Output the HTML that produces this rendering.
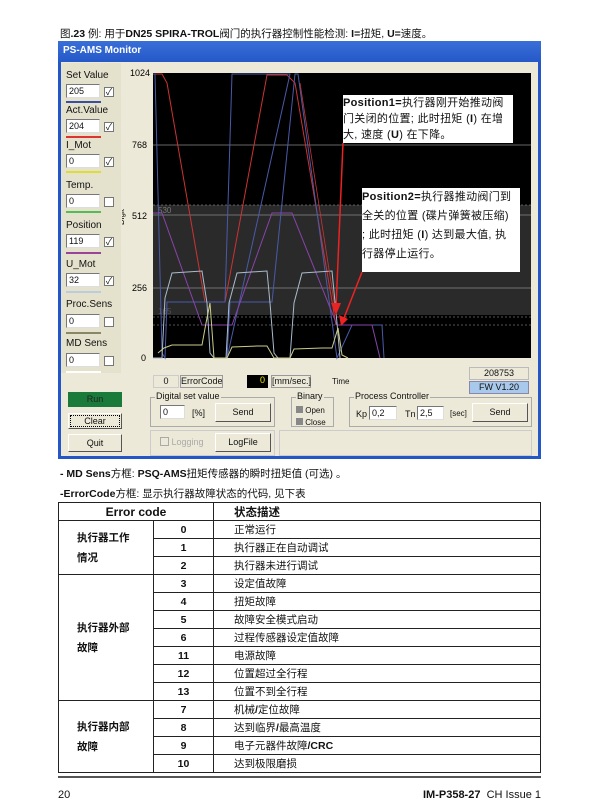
<!DOCTYPE html>
<html><head><meta charset="utf-8"><style>
*{margin:0;padding:0;box-sizing:border-box}
body{width:600px;height:811px;background:#fff;position:relative;font-family:"Liberation Sans","Noto Sans CJK SC",sans-serif;overflow:hidden;color:#111}
.a{position:absolute;white-space:nowrap}
.w{font-size:10px;color:#111}
.inp{position:absolute;background:#fff;border:1px solid #777;border-right-color:#ddd;border-bottom-color:#ddd;font-size:9px;padding-left:2px;line-height:12px}
.cb{position:absolute;width:10px;height:10px;background:#fff;border:1px solid #777;font-size:9px;line-height:8px;text-align:center}
.btn{position:absolute;background:#ece9d8;border:1px solid #fff;border-right-color:#555;border-bottom-color:#555;font-size:9px;text-align:center}
.grp{position:absolute;border:1px solid #aaa;}
.grp span{position:absolute;top:-7px;left:4px;background:#ece9d8;font-size:9px;padding:0 1px}
table{position:absolute;left:58px;top:502px;width:483px;border-collapse:collapse;font-size:10.5px}
td{border:1px solid #222;height:18px;padding:0;vertical-align:middle}
td.c{text-align:center;font-weight:bold;border-left:none}
td.d{padding-left:20px;border-left:1.5px solid #222}
td.g{font-weight:bold;padding-left:18px;line-height:20px}
.note{position:absolute;background:#fff;font-size:11px;white-space:nowrap;color:#111}
</style></head><body>
<div class="a" style="left:60px;top:26px;font-size:10.5px">图<b>.23</b> 例: 用于<b>DN25 SPIRA-TROL</b>阀门的执行器控制性能检测: <b>I=</b>扭矩, <b>U=</b>速度。</div>
<div class="a" style="left:58px;top:41px;width:483px;height:418px;background:#ece9d8;border:3px solid #2456c8;border-top:none"></div>
<div class="a" style="left:58px;top:41px;width:483px;height:21px;background:linear-gradient(#3a6fd8,#2558c8);color:#fff;font-weight:bold;font-size:10px;padding:4px 0 0 5px">PS-AMS Monitor</div>
<div class="a" style="left:61px;top:63px;width:60px;height:310px;background:#e4e1cc"></div>
<div class="a w" style="left:66px;top:70px">Set Value</div>
<div class="inp" style="left:66px;top:84px;width:34px;height:14px">205</div><div class="cb" style="left:104px;top:87px">✓</div>
<div class="a" style="left:66px;top:101px;width:35px;height:2px;background:#3a4fa0"></div>
<div class="a w" style="left:66px;top:105px">Act.Value</div>
<div class="inp" style="left:66px;top:119px;width:34px;height:14px">204</div><div class="cb" style="left:104px;top:122px">✓</div>
<div class="a" style="left:66px;top:136px;width:35px;height:2px;background:#d33"></div>
<div class="a w" style="left:66px;top:140px">I_Mot</div>
<div class="inp" style="left:66px;top:154px;width:34px;height:14px">0</div><div class="cb" style="left:104px;top:157px">✓</div>
<div class="a" style="left:66px;top:171px;width:35px;height:2px;background:#dd3"></div>
<div class="a w" style="left:66px;top:180px">Temp.</div>
<div class="inp" style="left:66px;top:194px;width:34px;height:14px">0</div><div class="cb" style="left:104px;top:197px"></div>
<div class="a" style="left:66px;top:211px;width:35px;height:2px;background:#5b5"></div>
<div class="a w" style="left:66px;top:220px">Position</div>
<div class="inp" style="left:66px;top:234px;width:34px;height:14px">119</div><div class="cb" style="left:104px;top:237px">✓</div>
<div class="a" style="left:66px;top:252px;width:35px;height:2px;background:#949"></div>
<div class="a w" style="left:66px;top:259px">U_Mot</div>
<div class="inp" style="left:66px;top:273px;width:34px;height:14px">32</div><div class="cb" style="left:104px;top:276px">✓</div>
<div class="a" style="left:66px;top:291px;width:35px;height:2px;background:#bcd"></div>
<div class="a w" style="left:66px;top:299px">Proc.Sens</div>
<div class="inp" style="left:66px;top:314px;width:34px;height:14px">0</div><div class="cb" style="left:104px;top:317px"></div>
<div class="a" style="left:66px;top:332px;width:35px;height:2px;background:#886"></div>
<div class="a w" style="left:66px;top:338px">MD Sens</div>
<div class="inp" style="left:66px;top:353px;width:34px;height:14px">0</div><div class="cb" style="left:104px;top:356px"></div>
<div class="a" style="left:66px;top:371px;width:35px;height:2px;background:#fff"></div>
<svg class="a" style="left:122px;top:63px" width="416" height="330">
<text x="8" y="13" font-size="9" font-family="Liberation Sans">1024</text>
<text x="10" y="85" font-size="9" font-family="Liberation Sans">768</text>
<text x="10" y="156" font-size="9" font-family="Liberation Sans">512</text>
<text x="10" y="228" font-size="9" font-family="Liberation Sans">256</text>
<text x="19" y="298" font-size="9" font-family="Liberation Sans">0</text>
<text x="0" y="0" font-size="8" font-family="Liberation Sans" transform="translate(2,162) rotate(-90)">Digit</text>
<rect x="31" y="10" width="378" height="285" fill="#000"/>
<rect x="31" y="142" width="378" height="110" fill="#2a2a2a"/>
<g stroke="#888" stroke-width="0.8"><line x1="31" y1="82" x2="409" y2="82"/><line x1="31" y1="152" x2="409" y2="152"/><line x1="31" y1="225" x2="409" y2="225"/></g>
<g stroke="#aaa" stroke-width="0.6" stroke-dasharray="2,2"><line x1="31" y1="142" x2="409" y2="142"/><line x1="31" y1="254" x2="409" y2="254"/><line x1="31" y1="262" x2="409" y2="262"/></g>
<text x="36" y="150" font-size="8" fill="#777">530</text><text x="36" y="251" font-size="8" fill="#555">165</text>
<polyline fill="none" stroke="#cc3333" stroke-width="1" points="33,11 40,11 45,20 83,239 103,239 145,12 165,12 173,20 214,262"/>
<polyline fill="none" stroke="#4a5aa8" stroke-width="1" points="31,11 33,11 40,290 43,295 45,239 103,239 110,11 168,11 105,295 108,239 150,239 173,11 176,11 215,295 230,262 240,262 260,262 262,295"/>
<polyline fill="none" stroke="#8844aa" stroke-width="1" points="31,150 40,150 80,262 110,262 150,150 170,150 215,262 250,262 258,295"/>
<polyline fill="none" stroke="#aabbcc" stroke-width="1" points="31,295 40,295 43,235 50,210 80,208 85,240 88,290 92,295 104,295 107,240 115,210 145,208 148,240 152,290 156,295 168,295 172,240 180,210 210,208 215,260 218,295"/>
<polyline fill="none" stroke="#cccc88" stroke-width="1" points="36,290 42,285 50,282 80,282 84,260 88,240 92,295 105,295 110,284 135,283 145,283 152,295 168,295 172,286 200,285 210,285 216,265 220,292 226,295"/>
<line x1="221" y1="80" x2="214" y2="245" stroke="#e22" stroke-width="1.5"/>
<polygon points="209,240 219,240 214,252" fill="#e22"/>
<line x1="240" y1="209" x2="222" y2="255" stroke="#e22" stroke-width="1.5"/>
<polygon points="217,252 226,256 219,263" fill="#e22"/>
<line x1="178" y1="20" x2="213" y2="245" stroke="#c33" stroke-width="0.8"/>
</svg>
<div class="note" style="left:343px;top:95px;width:170px;height:48px;line-height:16px;letter-spacing:0.3px"><b>Position1=</b>执行器刚开始推动阀<br>门关闭的位置; 此时扭矩 (<b>I</b>) 在增<br>大, 速度 (<b>U</b>) 在下降。</div>
<div class="note" style="left:362px;top:188px;width:158px;height:84px;line-height:19px;letter-spacing:0.3px"><b>Position2=</b>执行器推动阀门到<br>全关的位置 (碟片弹簧被压缩)<br>; 此时扭矩 (<b>I</b>) 达到最大值, 执<br>行器停止运行。</div>
<div class="btn" style="left:153px;top:375px;width:26px;height:13px;border:1px solid #ccc">0</div>
<div class="btn" style="left:180px;top:375px;width:43px;height:13px;border:1px solid #999">ErrorCode</div>
<div class="a" style="left:247px;top:375px;width:21px;height:13px;background:#000;color:#ee0;font-size:9px;text-align:right;padding-right:3px">0</div>
<div class="btn" style="left:271px;top:375px;width:40px;height:13px;border:1px solid #999">[mm/sec.]</div>
<div class="a" style="left:332px;top:377px;font-size:8px">Time</div>
<div class="btn" style="left:469px;top:367px;width:60px;height:13px;border:1px solid #bbb">208753</div>
<div class="a" style="left:469px;top:381px;width:60px;height:13px;background:#a8c8ec;font-size:9px;text-align:center;border:1px solid #88a">FW V1.20</div>
<div class="a" style="left:68px;top:392px;width:54px;height:15px;background:#1a7a3a;font-size:9px;text-align:center;line-height:15px;color:#222">Run</div>
<div class="btn" style="left:68px;top:413px;width:54px;height:16px;line-height:14px;outline:1px dotted #000;outline-offset:-3px">Clear</div>
<div class="btn" style="left:68px;top:434px;width:54px;height:18px;line-height:16px">Quit</div>
<div class="grp" style="left:150px;top:397px;width:125px;height:30px"><span>Digital set value</span></div>
<div class="inp" style="left:160px;top:405px;width:25px;height:14px">0</div>
<div class="a" style="left:192px;top:408px;font-size:9px">[%]</div>
<div class="btn" style="left:215px;top:403px;width:56px;height:19px;line-height:17px">Send</div>
<div class="grp" style="left:291px;top:397px;width:43px;height:30px"><span>Binary</span></div>
<div class="a" style="left:296px;top:405px;font-size:8px;line-height:12px"><span style="display:inline-block;width:7px;height:7px;background:#888"></span> Open<br><span style="display:inline-block;width:7px;height:7px;background:#888"></span> Close</div>
<div class="grp" style="left:349px;top:397px;width:183px;height:30px"><span>Process Controller</span></div>
<div class="a" style="left:356px;top:409px;font-size:9px">Kp</div>
<div class="inp" style="left:369px;top:406px;width:28px;height:14px">0,2</div>
<div class="a" style="left:405px;top:409px;font-size:9px">Tn</div>
<div class="inp" style="left:417px;top:406px;width:27px;height:14px">2,5</div>
<div class="a" style="left:450px;top:409px;font-size:8px">[sec]</div>
<div class="btn" style="left:472px;top:403px;width:56px;height:19px;line-height:17px">Send</div>
<div class="grp" style="left:150px;top:430px;width:125px;height:26px;border-color:#ccc"></div>
<div class="a" style="left:160px;top:437px;font-size:9px;color:#aaa"><span style="display:inline-block;width:9px;height:9px;border:1px solid #aaa;vertical-align:-1px"></span> Logging</div>
<div class="btn" style="left:215px;top:433px;width:56px;height:19px;line-height:17px">LogFile</div>
<div class="grp" style="left:279px;top:430px;width:253px;height:26px;border-color:#ccc"></div>
<div class="a" style="left:60px;top:466px;font-size:10.5px"><b>- MD Sens</b>方框: <b>PSQ-AMS</b>扭矩传感器的瞬时扭矩值 (可选) 。</div>
<div class="a" style="left:60px;top:486px;font-size:10.5px"><b>-ErrorCode</b>方框: 显示执行器故障状态的代码, 见下表</div>
<table>
<tr><td colspan="2" style="text-align:center;font-weight:bold;font-size:12px;height:17px">Error code</td><td class="d" style="font-weight:bold;font-size:11.5px">状态描述</td></tr>
<tr><td rowspan="3" class="g" style="width:95px">执行器工作<br>情况</td><td class="c" style="width:60px">0</td><td class="d">正常运行</td></tr>
<tr><td class="c">1</td><td class="d">执行器正在自动调试</td></tr>
<tr><td class="c">2</td><td class="d">执行器未进行调试</td></tr>
<tr><td rowspan="7" class="g">执行器外部<br>故障</td><td class="c">3</td><td class="d">设定值故障</td></tr>
<tr><td class="c">4</td><td class="d">扭矩故障</td></tr>
<tr><td class="c">5</td><td class="d">故障安全模式启动</td></tr>
<tr><td class="c">6</td><td class="d">过程传感器设定值故障</td></tr>
<tr><td class="c">11</td><td class="d">电源故障</td></tr>
<tr><td class="c">12</td><td class="d">位置超过全行程</td></tr>
<tr><td class="c">13</td><td class="d">位置不到全行程</td></tr>
<tr><td rowspan="4" class="g">执行器内部<br>故障</td><td class="c">7</td><td class="d">机械<b>/</b>定位故障</td></tr>
<tr><td class="c">8</td><td class="d">达到临界<b>/</b>最高温度</td></tr>
<tr><td class="c">9</td><td class="d">电子元器件故障<b>/CRC</b></td></tr>
<tr><td class="c">10</td><td class="d">达到极限磨损</td></tr>
</table>
<div class="a" style="left:58px;top:776px;width:483px;height:2px;background:#555"></div>
<div class="a" style="left:58px;top:789px;font-size:11px">20</div>
<div class="a" style="right:59px;top:789px;font-size:11px"><b>IM-P358-27</b>&nbsp; CH Issue 1</div>
</body></html>
